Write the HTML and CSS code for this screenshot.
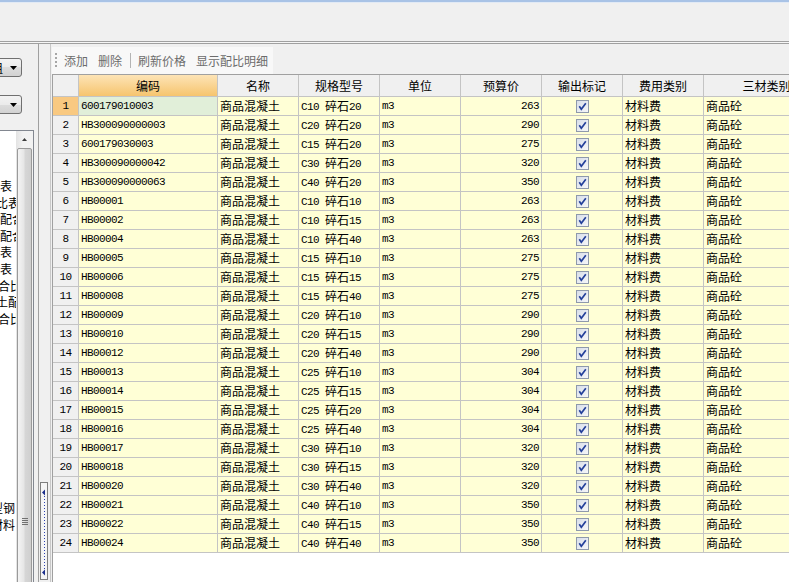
FILE: index.html
```html
<!DOCTYPE html>
<html lang="zh">
<head>
<meta charset="utf-8">
<title>配比</title>
<link rel="stylesheet" href="styles.css">
</head>
<body>
<div class="titlebar"></div>
<div class="menubar"></div>
<div class="hsplit"></div>
<div class="main">
  <div class="left">
    <div class="combo c-first"><span class="ctext">工程分组</span><span class="carrow"><svg width="7" height="4" viewBox="0 0 7 4"><path d="M0 0h7L3.5 4z" fill="#000"/></svg></span></div>
    <div class="combo c-second"><span class="ctext"></span><span class="carrow"><svg width="7" height="4" viewBox="0 0 7 4"><path d="M0 0h7L3.5 4z" fill="#000"/></svg></span></div>
    <div class="listbox">
      <div class="items">
        <div class="li o23">工程量表</div>
        <div class="li o31">配合比表</div>
        <div class="li o35">砂浆配合比</div>
        <div class="li o35">抹灰配合比</div>
        <div class="li o35">材料表</div>
        <div class="li o35">机械表</div>
        <div class="li o21">砂浆配合比</div>
        <div class="li o31">混凝土配合比</div>
        <div class="li o21">灰浆配合比</div>
        <div class="li gap o50">型钢</div>
        <div class="li o50">材料</div>
      </div>
      <div class="vscroll">
        <div class="sbtn"><svg width="5" height="3" viewBox="0 0 5 3"><path d="M0 3h5L2.5 0z" fill="#3c3c3c"/></svg></div>
        <div class="thumb"><svg class="grip" width="6" height="7" viewBox="0 0 6 7"><path d="M0 .5h6M0 2.5h6M0 4.5h6M0 6.5h6" stroke="#707070" stroke-width="1"/></svg></div>
      </div>
    </div>
  </div>
  <div class="vsplit">
    <div class="collapse"><svg width="6" height="96" viewBox="0 0 6 96"><path d="M1 9.5L4 6.5V12.5z" fill="#1c2f8c"/><path d="M1 89.5L4 86.5V92.5z" fill="#1c2f8c"/><path d="M3.5 13V86" stroke="#2a3fb0" stroke-width="1" stroke-dasharray="1 2"/></svg></div>
  </div>
  <div class="right">
    <div class="toolbar">
      <span class="gripper"></span>
      <span class="tb first">添加</span>
      <span class="tb">删除</span>
      <span class="tsep"></span>
      <span class="tb after-sep">刷新价格</span>
      <span class="tb">显示配比明细</span>
    </div>
    <div class="grid">
      <div class="row head">
        <div class="cell c0"></div><div class="cell c1 sel-head">编码</div><div class="cell c2">名称</div><div class="cell c3">规格型号</div><div class="cell c4">单位</div><div class="cell c5">预算价</div><div class="cell c6">输出标记</div><div class="cell c7">费用类别</div><div class="cell c8">三材类别</div>
      </div>
      <div class="row"><div class="cell c0 m cur">1</div><div class="cell c1 m selcell">600179010003</div><div class="cell c2">商品混凝土</div><div class="cell c3"><span class="m">C10 </span>碎石<span class="m">20</span></div><div class="cell c4 m">m3</div><div class="cell c5 m">263</div><div class="cell c6"><span class="cb"><svg width="11" height="11" viewBox="0 0 11 11"><path d="M2.3 5.3L4.3 8.2L8.8 2.2" fill="none" stroke="#23409a" stroke-width="1.7"/></svg></span></div><div class="cell c7">材料费</div><div class="cell c8">商品砼</div></div>
      <div class="row"><div class="cell c0 m">2</div><div class="cell c1 m">HB300090000003</div><div class="cell c2">商品混凝土</div><div class="cell c3"><span class="m">C20 </span>碎石<span class="m">20</span></div><div class="cell c4 m">m3</div><div class="cell c5 m">290</div><div class="cell c6"><span class="cb"><svg width="11" height="11" viewBox="0 0 11 11"><path d="M2.3 5.3L4.3 8.2L8.8 2.2" fill="none" stroke="#23409a" stroke-width="1.7"/></svg></span></div><div class="cell c7">材料费</div><div class="cell c8">商品砼</div></div>
      <div class="row"><div class="cell c0 m">3</div><div class="cell c1 m">600179030003</div><div class="cell c2">商品混凝土</div><div class="cell c3"><span class="m">C15 </span>碎石<span class="m">20</span></div><div class="cell c4 m">m3</div><div class="cell c5 m">275</div><div class="cell c6"><span class="cb"><svg width="11" height="11" viewBox="0 0 11 11"><path d="M2.3 5.3L4.3 8.2L8.8 2.2" fill="none" stroke="#23409a" stroke-width="1.7"/></svg></span></div><div class="cell c7">材料费</div><div class="cell c8">商品砼</div></div>
      <div class="row"><div class="cell c0 m">4</div><div class="cell c1 m">HB300090000042</div><div class="cell c2">商品混凝土</div><div class="cell c3"><span class="m">C30 </span>碎石<span class="m">20</span></div><div class="cell c4 m">m3</div><div class="cell c5 m">320</div><div class="cell c6"><span class="cb"><svg width="11" height="11" viewBox="0 0 11 11"><path d="M2.3 5.3L4.3 8.2L8.8 2.2" fill="none" stroke="#23409a" stroke-width="1.7"/></svg></span></div><div class="cell c7">材料费</div><div class="cell c8">商品砼</div></div>
      <div class="row"><div class="cell c0 m">5</div><div class="cell c1 m">HB300090000063</div><div class="cell c2">商品混凝土</div><div class="cell c3"><span class="m">C40 </span>碎石<span class="m">20</span></div><div class="cell c4 m">m3</div><div class="cell c5 m">350</div><div class="cell c6"><span class="cb"><svg width="11" height="11" viewBox="0 0 11 11"><path d="M2.3 5.3L4.3 8.2L8.8 2.2" fill="none" stroke="#23409a" stroke-width="1.7"/></svg></span></div><div class="cell c7">材料费</div><div class="cell c8">商品砼</div></div>
      <div class="row"><div class="cell c0 m">6</div><div class="cell c1 m">HB00001</div><div class="cell c2">商品混凝土</div><div class="cell c3"><span class="m">C10 </span>碎石<span class="m">10</span></div><div class="cell c4 m">m3</div><div class="cell c5 m">263</div><div class="cell c6"><span class="cb"><svg width="11" height="11" viewBox="0 0 11 11"><path d="M2.3 5.3L4.3 8.2L8.8 2.2" fill="none" stroke="#23409a" stroke-width="1.7"/></svg></span></div><div class="cell c7">材料费</div><div class="cell c8">商品砼</div></div>
      <div class="row"><div class="cell c0 m">7</div><div class="cell c1 m">HB00002</div><div class="cell c2">商品混凝土</div><div class="cell c3"><span class="m">C10 </span>碎石<span class="m">15</span></div><div class="cell c4 m">m3</div><div class="cell c5 m">263</div><div class="cell c6"><span class="cb"><svg width="11" height="11" viewBox="0 0 11 11"><path d="M2.3 5.3L4.3 8.2L8.8 2.2" fill="none" stroke="#23409a" stroke-width="1.7"/></svg></span></div><div class="cell c7">材料费</div><div class="cell c8">商品砼</div></div>
      <div class="row"><div class="cell c0 m">8</div><div class="cell c1 m">HB00004</div><div class="cell c2">商品混凝土</div><div class="cell c3"><span class="m">C10 </span>碎石<span class="m">40</span></div><div class="cell c4 m">m3</div><div class="cell c5 m">263</div><div class="cell c6"><span class="cb"><svg width="11" height="11" viewBox="0 0 11 11"><path d="M2.3 5.3L4.3 8.2L8.8 2.2" fill="none" stroke="#23409a" stroke-width="1.7"/></svg></span></div><div class="cell c7">材料费</div><div class="cell c8">商品砼</div></div>
      <div class="row"><div class="cell c0 m">9</div><div class="cell c1 m">HB00005</div><div class="cell c2">商品混凝土</div><div class="cell c3"><span class="m">C15 </span>碎石<span class="m">10</span></div><div class="cell c4 m">m3</div><div class="cell c5 m">275</div><div class="cell c6"><span class="cb"><svg width="11" height="11" viewBox="0 0 11 11"><path d="M2.3 5.3L4.3 8.2L8.8 2.2" fill="none" stroke="#23409a" stroke-width="1.7"/></svg></span></div><div class="cell c7">材料费</div><div class="cell c8">商品砼</div></div>
      <div class="row"><div class="cell c0 m">10</div><div class="cell c1 m">HB00006</div><div class="cell c2">商品混凝土</div><div class="cell c3"><span class="m">C15 </span>碎石<span class="m">15</span></div><div class="cell c4 m">m3</div><div class="cell c5 m">275</div><div class="cell c6"><span class="cb"><svg width="11" height="11" viewBox="0 0 11 11"><path d="M2.3 5.3L4.3 8.2L8.8 2.2" fill="none" stroke="#23409a" stroke-width="1.7"/></svg></span></div><div class="cell c7">材料费</div><div class="cell c8">商品砼</div></div>
      <div class="row"><div class="cell c0 m">11</div><div class="cell c1 m">HB00008</div><div class="cell c2">商品混凝土</div><div class="cell c3"><span class="m">C15 </span>碎石<span class="m">40</span></div><div class="cell c4 m">m3</div><div class="cell c5 m">275</div><div class="cell c6"><span class="cb"><svg width="11" height="11" viewBox="0 0 11 11"><path d="M2.3 5.3L4.3 8.2L8.8 2.2" fill="none" stroke="#23409a" stroke-width="1.7"/></svg></span></div><div class="cell c7">材料费</div><div class="cell c8">商品砼</div></div>
      <div class="row"><div class="cell c0 m">12</div><div class="cell c1 m">HB00009</div><div class="cell c2">商品混凝土</div><div class="cell c3"><span class="m">C20 </span>碎石<span class="m">10</span></div><div class="cell c4 m">m3</div><div class="cell c5 m">290</div><div class="cell c6"><span class="cb"><svg width="11" height="11" viewBox="0 0 11 11"><path d="M2.3 5.3L4.3 8.2L8.8 2.2" fill="none" stroke="#23409a" stroke-width="1.7"/></svg></span></div><div class="cell c7">材料费</div><div class="cell c8">商品砼</div></div>
      <div class="row"><div class="cell c0 m">13</div><div class="cell c1 m">HB00010</div><div class="cell c2">商品混凝土</div><div class="cell c3"><span class="m">C20 </span>碎石<span class="m">15</span></div><div class="cell c4 m">m3</div><div class="cell c5 m">290</div><div class="cell c6"><span class="cb"><svg width="11" height="11" viewBox="0 0 11 11"><path d="M2.3 5.3L4.3 8.2L8.8 2.2" fill="none" stroke="#23409a" stroke-width="1.7"/></svg></span></div><div class="cell c7">材料费</div><div class="cell c8">商品砼</div></div>
      <div class="row"><div class="cell c0 m">14</div><div class="cell c1 m">HB00012</div><div class="cell c2">商品混凝土</div><div class="cell c3"><span class="m">C20 </span>碎石<span class="m">40</span></div><div class="cell c4 m">m3</div><div class="cell c5 m">290</div><div class="cell c6"><span class="cb"><svg width="11" height="11" viewBox="0 0 11 11"><path d="M2.3 5.3L4.3 8.2L8.8 2.2" fill="none" stroke="#23409a" stroke-width="1.7"/></svg></span></div><div class="cell c7">材料费</div><div class="cell c8">商品砼</div></div>
      <div class="row"><div class="cell c0 m">15</div><div class="cell c1 m">HB00013</div><div class="cell c2">商品混凝土</div><div class="cell c3"><span class="m">C25 </span>碎石<span class="m">10</span></div><div class="cell c4 m">m3</div><div class="cell c5 m">304</div><div class="cell c6"><span class="cb"><svg width="11" height="11" viewBox="0 0 11 11"><path d="M2.3 5.3L4.3 8.2L8.8 2.2" fill="none" stroke="#23409a" stroke-width="1.7"/></svg></span></div><div class="cell c7">材料费</div><div class="cell c8">商品砼</div></div>
      <div class="row"><div class="cell c0 m">16</div><div class="cell c1 m">HB00014</div><div class="cell c2">商品混凝土</div><div class="cell c3"><span class="m">C25 </span>碎石<span class="m">15</span></div><div class="cell c4 m">m3</div><div class="cell c5 m">304</div><div class="cell c6"><span class="cb"><svg width="11" height="11" viewBox="0 0 11 11"><path d="M2.3 5.3L4.3 8.2L8.8 2.2" fill="none" stroke="#23409a" stroke-width="1.7"/></svg></span></div><div class="cell c7">材料费</div><div class="cell c8">商品砼</div></div>
      <div class="row"><div class="cell c0 m">17</div><div class="cell c1 m">HB00015</div><div class="cell c2">商品混凝土</div><div class="cell c3"><span class="m">C25 </span>碎石<span class="m">20</span></div><div class="cell c4 m">m3</div><div class="cell c5 m">304</div><div class="cell c6"><span class="cb"><svg width="11" height="11" viewBox="0 0 11 11"><path d="M2.3 5.3L4.3 8.2L8.8 2.2" fill="none" stroke="#23409a" stroke-width="1.7"/></svg></span></div><div class="cell c7">材料费</div><div class="cell c8">商品砼</div></div>
      <div class="row"><div class="cell c0 m">18</div><div class="cell c1 m">HB00016</div><div class="cell c2">商品混凝土</div><div class="cell c3"><span class="m">C25 </span>碎石<span class="m">40</span></div><div class="cell c4 m">m3</div><div class="cell c5 m">304</div><div class="cell c6"><span class="cb"><svg width="11" height="11" viewBox="0 0 11 11"><path d="M2.3 5.3L4.3 8.2L8.8 2.2" fill="none" stroke="#23409a" stroke-width="1.7"/></svg></span></div><div class="cell c7">材料费</div><div class="cell c8">商品砼</div></div>
      <div class="row"><div class="cell c0 m">19</div><div class="cell c1 m">HB00017</div><div class="cell c2">商品混凝土</div><div class="cell c3"><span class="m">C30 </span>碎石<span class="m">10</span></div><div class="cell c4 m">m3</div><div class="cell c5 m">320</div><div class="cell c6"><span class="cb"><svg width="11" height="11" viewBox="0 0 11 11"><path d="M2.3 5.3L4.3 8.2L8.8 2.2" fill="none" stroke="#23409a" stroke-width="1.7"/></svg></span></div><div class="cell c7">材料费</div><div class="cell c8">商品砼</div></div>
      <div class="row"><div class="cell c0 m">20</div><div class="cell c1 m">HB00018</div><div class="cell c2">商品混凝土</div><div class="cell c3"><span class="m">C30 </span>碎石<span class="m">15</span></div><div class="cell c4 m">m3</div><div class="cell c5 m">320</div><div class="cell c6"><span class="cb"><svg width="11" height="11" viewBox="0 0 11 11"><path d="M2.3 5.3L4.3 8.2L8.8 2.2" fill="none" stroke="#23409a" stroke-width="1.7"/></svg></span></div><div class="cell c7">材料费</div><div class="cell c8">商品砼</div></div>
      <div class="row"><div class="cell c0 m">21</div><div class="cell c1 m">HB00020</div><div class="cell c2">商品混凝土</div><div class="cell c3"><span class="m">C30 </span>碎石<span class="m">40</span></div><div class="cell c4 m">m3</div><div class="cell c5 m">320</div><div class="cell c6"><span class="cb"><svg width="11" height="11" viewBox="0 0 11 11"><path d="M2.3 5.3L4.3 8.2L8.8 2.2" fill="none" stroke="#23409a" stroke-width="1.7"/></svg></span></div><div class="cell c7">材料费</div><div class="cell c8">商品砼</div></div>
      <div class="row"><div class="cell c0 m">22</div><div class="cell c1 m">HB00021</div><div class="cell c2">商品混凝土</div><div class="cell c3"><span class="m">C40 </span>碎石<span class="m">10</span></div><div class="cell c4 m">m3</div><div class="cell c5 m">350</div><div class="cell c6"><span class="cb"><svg width="11" height="11" viewBox="0 0 11 11"><path d="M2.3 5.3L4.3 8.2L8.8 2.2" fill="none" stroke="#23409a" stroke-width="1.7"/></svg></span></div><div class="cell c7">材料费</div><div class="cell c8">商品砼</div></div>
      <div class="row"><div class="cell c0 m">23</div><div class="cell c1 m">HB00022</div><div class="cell c2">商品混凝土</div><div class="cell c3"><span class="m">C40 </span>碎石<span class="m">15</span></div><div class="cell c4 m">m3</div><div class="cell c5 m">350</div><div class="cell c6"><span class="cb"><svg width="11" height="11" viewBox="0 0 11 11"><path d="M2.3 5.3L4.3 8.2L8.8 2.2" fill="none" stroke="#23409a" stroke-width="1.7"/></svg></span></div><div class="cell c7">材料费</div><div class="cell c8">商品砼</div></div>
      <div class="row"><div class="cell c0 m">24</div><div class="cell c1 m">HB00024</div><div class="cell c2">商品混凝土</div><div class="cell c3"><span class="m">C40 </span>碎石<span class="m">40</span></div><div class="cell c4 m">m3</div><div class="cell c5 m">350</div><div class="cell c6"><span class="cb"><svg width="11" height="11" viewBox="0 0 11 11"><path d="M2.3 5.3L4.3 8.2L8.8 2.2" fill="none" stroke="#23409a" stroke-width="1.7"/></svg></span></div><div class="cell c7">材料费</div><div class="cell c8">商品砼</div></div>
    </div>
  </div>
</div>
</body>
</html>
```
FILE: styles.css
```css
* { box-sizing: border-box; }
html, body { margin: 0; padding: 0; }
body {
  width: 789px;
  height: 582px;
  overflow: hidden;
  background: #f0f0f0;
  font-family: "Noto Sans CJK SC", "Noto Sans", sans-serif;
  font-size: 12px;
  color: #000;
}
.titlebar {
  height: 3px;
  background: linear-gradient(to bottom, #a9c3e6 0, #a9c3e6 2px, #e2eaf5 2px);
}
.menubar { height: 38px; background: #f0f0f0; }
.hsplit {
  height: 3px;
  border-top: 1px solid #a0a0a0;
  border-bottom: 1px solid #a0a0a0;
  background: #f6f6f6;
}
.main { display: flex; height: 538px; }

/* left panel */
.left {
  width: 39px;
  flex: none;
  border-right: 1px solid #a0a0a0;
  overflow: hidden;
  display: flex;
  flex-direction: column;
}
.combo {
  flex: none;
  display: flex;
  margin-left: -60px;
  width: 82px;
  height: 19px;
  border: 1px solid #707070;
  border-radius: 3px;
  background: linear-gradient(to bottom, #f3f3f3, #ebebeb 50%, #dddddd 50%, #d2d2d2);
}
.c-first { margin-top: 14px; }
.c-second { margin-top: 18px; }
.ctext {
  flex: 1;
  text-align: right;
  line-height: 17px;
  white-space: nowrap;
  overflow: hidden;
  padding-right: 1px;
}
.carrow {
  width: 17px;
  flex: none;
  display: flex;
  align-items: center;
  padding-left: 6px;
}
.listbox {
  flex: none;
  margin-top: 16px;
  margin-left: -60px;
  width: 94px;
  height: 480px;
  border: 1px solid #828790;
  display: flex;
  background: #fff;
}
.items {
  flex: 1;
  overflow: hidden;
  padding-top: 47px;
}
.li {
  height: 16.6px;
  line-height: 16.6px;
  white-space: nowrap;
}
.li.gap { margin-top: 173px; }
.o21 { margin-left: 21px; }
.o23 { margin-left: 23px; }
.o31 { margin-left: 31px; }
.o35 { margin-left: 35px; }
.o50 { margin-left: 50px; }
.vscroll {
  width: 17px;
  flex: none;
  background: linear-gradient(to right, #e3e3e3, #f2f2f2 40%, #f2f2f2);
  display: flex;
  flex-direction: column;
}
.sbtn {
  height: 17px;
  flex: none;
  display: flex;
  align-items: center;
  justify-content: center;
}
.thumb {
  flex: none;
  height: 760px;
  margin: 0 1px;
  border: 1px solid #9a9a9a;
  border-radius: 2px;
  background: linear-gradient(to right, #f4f4f4, #e6e6e6 45%, #d6d6d6 55%, #cfcfcf);
  display: flex;
  justify-content: center;
  padding-top: 369px;
}

/* splitter */
.vsplit {
  width: 11px;
  flex: none;
  display: flex;
  flex-direction: column;
  justify-content: flex-end;
  padding-bottom: 2px;
}
.collapse {
  margin-left: 1px;
  width: 8px;
  height: 98px;
  border: 1px solid #7e7e7e;
  background: #f5f5f5;
}
.collapse svg { display: block; }

/* right panel */
.right {
  flex: 1;
  min-width: 0;
  border-left: 1px solid #c8c8c8;
  display: flex;
  flex-direction: column;
  overflow: hidden;
}
.toolbar {
  flex: none;
  margin: 3px 0 0 1px;
  width: 221px;
  height: 27px;
  background: #f8f8f8;
  display: flex;
  align-items: center;
  color: #6c6c6c;
  white-space: nowrap;
}
.gripper {
  margin-left: 3px;
  width: 2px;
  height: 15px;
  background: repeating-linear-gradient(to bottom, #a6a6a6 0, #a6a6a6 2px, transparent 2px, transparent 4px);
}
.tb { margin-left: 10px; line-height: 16px; }
.tb.first { margin-left: 7px; }
.tsep {
  margin-left: 8px;
  width: 1px;
  height: 15px;
  background: #b4b4b4;
}
.tb.after-sep { margin-left: 7px; }

/* grid */
.grid {
  flex: 1;
  margin-left: 1px;
  border-left: 1px solid #a0a0a0;
  border-top: 1px solid #a0a0a0;
  background: #fff;
  overflow: hidden;
}
.row { display: flex; height: 19px; }
.cell {
  flex: none;
  height: 19px;
  line-height: 18px;
  padding: 0 2px;
  border-right: 1px solid #c4c4c4;
  border-bottom: 1px solid #c4c4c4;
  background: #ffffd6;
  white-space: nowrap;
  overflow: hidden;
}
.row.head { height: 22px; }
.head .cell {
  height: 22px;
  line-height: 21px;
  background: #f0f0f0;
  text-align: center;
}
.head .cell.sel-head { background: linear-gradient(to bottom, #fde4b6, #f6c46e); }
.c0 { width: 26px; }
.c1 { width: 139px; }
.c2, .c3, .c4, .c5, .c6, .c7 { width: 81px; }
.c8 { width: 126px; }
.cell.c0 { background: #f0f0f0; text-align: center; padding: 0; }
.cell.c0.cur { background: #f9c981; }
.cell.selcell { background: #e1efd9; }
.c5 { text-align: right; }
.m {
  font-family: "Liberation Mono", "DejaVu Sans Mono", monospace;
  font-size: 11px;
  letter-spacing: -0.6px;
}
.c3 .m { vertical-align: 1px; }
.cell.c6 {
  display: flex;
  align-items: center;
  justify-content: center;
}
.cb {
  display: block;
  width: 13px;
  height: 13px;
  border: 1px solid #8e99ac;
  background: linear-gradient(to bottom right, #d8dee9, #f6f7f9);
}
.cb svg { display: block; }
```
